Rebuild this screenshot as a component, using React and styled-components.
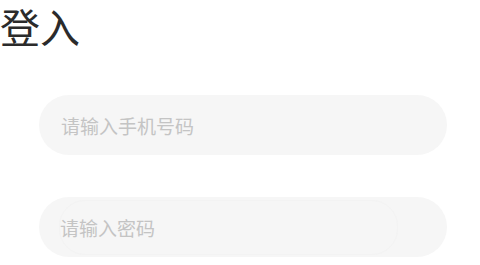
import React from 'react'
import styled, { createGlobalStyle } from 'styled-components'

const GlobalStyle = createGlobalStyle`
  html, body {
    margin: 0;
    padding: 0;
    background: #ffffff;
    font-family: "Noto Sans CJK SC", "Noto Sans", sans-serif;
  }
`

const Page = styled.div`
  width: 480px;
  height: 265px;
  overflow: hidden;
`
const Title = styled.h1`
  margin: 0;
  font-size: 40px;
  font-weight: 400;
  line-height: 52px;
  color: #2b2b2b;
`
const Form = styled.form`
  display: flex;
  flex-direction: column;
  gap: 42px;
  margin: 43px 0 0 39px;
  width: 408px;
`
const Field = styled.div`
  display: flex;
  align-items: center;
  height: 60px;
  border-radius: 30px;
  background: #f6f6f6;
  padding: 0 49px 0 21px;
  box-sizing: border-box;
`
const Input = styled.input`
  flex: 1;
  min-width: 0;
  height: ${props => (props.boxed ? '53px' : '60px')};
  border: 1px solid ${props => (props.boxed ? '#f3f3f3' : 'transparent')};
  border-radius: 26px;
  background: transparent;
  outline: none;
  padding: 0;
  font-family: inherit;
  font-size: 19px;
  color: #333;
  margin-left: ${props => (props.boxed ? '-1px' : '0')};

  &::placeholder {
    color: #c4c4c4;
  }
`

const App = () => {
  return (
    <Page>
      <GlobalStyle />
      <Title>登入</Title>
      <Form>
        <Field>
          <Input type="tel" placeholder="请输入手机号码" />
        </Field>
        <Field>
          <Input boxed type="password" placeholder="请输入密码" />
        </Field>
      </Form>
    </Page>
  )
}

export default App
